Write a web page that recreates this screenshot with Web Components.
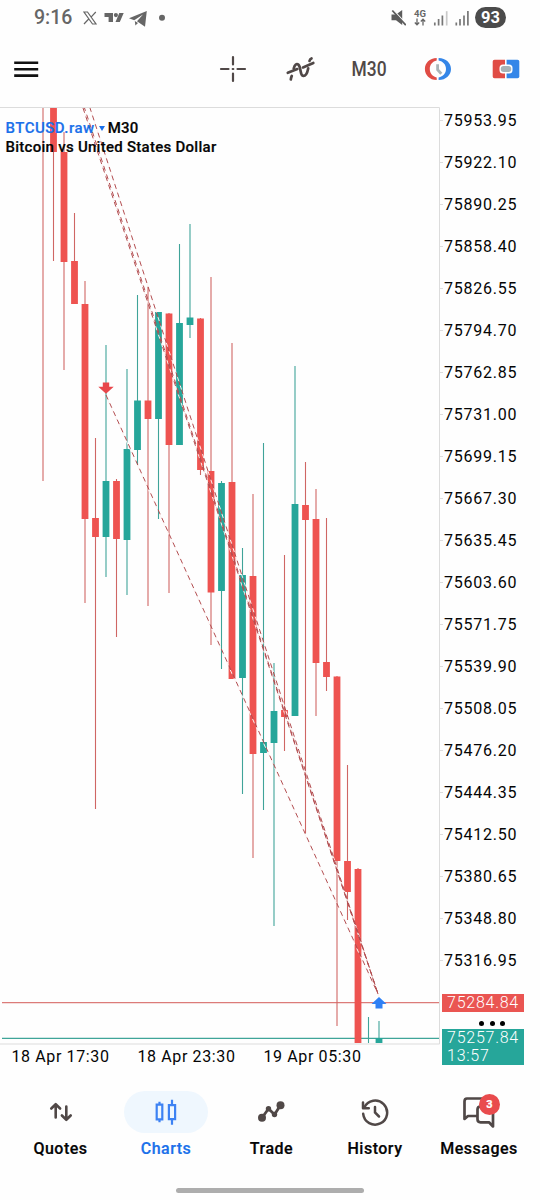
<!DOCTYPE html>
<html lang="en">
<head>
<meta charset="utf-8">
<meta name="viewport" content="width=device-width, initial-scale=1">
<title>BTCUSD.raw M30</title>
<style>
  html, body {
    margin: 0;
    background: #fefefe;
  }

  body {
    width: 540px;
    height: 1200px;
    overflow: hidden;
    font-family: Roboto, "Liberation Sans", sans-serif;
    color: #050505;
  }
</style>
</head>
<body>
<trade-app></trade-app>

<script>
const RED = "#ee5350";
const GREEN = "#26a69a";

const define = (name, html, setup) => {
  const template = document.createElement("template");
  template.innerHTML = html;
  customElements.define(name, class extends HTMLElement {
    constructor() {
      super();
      this.attachShadow({ mode: "open" }).append(template.content.cloneNode(true));
    }

    $(x) { return this.shadowRoot.querySelector(x); }

    connectedCallback() {
      if (setup) setup.call(this);
    }
  });
};

define("status-bar", `
  <style>
  :host {
    display: flex;
    align-items: center;
    height: 34px;
    padding: 1px 34px 0;
    box-sizing: border-box;
    color: #666;
  }

  svg { display: block; }

  .time {
    font-size: 19.5px;
    font-weight: 500;
    width: 49px;
    line-height: 34px;
  }

  .spacer { flex: 1; }

  .net {
    display: flex;
    flex-direction: column;
    align-items: center;
    width: 14px;
    margin: 0 6px 0 7px;
    font-size: 9.5px;
    line-height: 9px;
    font-weight: 700;
  }

  .battery {
    width: 31px;
    height: 21px;
    margin: 0 0 0 6px;
    border-radius: 11px;
    background: #4b4b4b;
    color: #fff;
    font-size: 16.5px;
    font-weight: 700;
    line-height: 22px;
    text-align: center;
  }
  </style>

  <div class="time">9:16</div>
  <svg width="86" height="20" viewBox="83 7.500 86 20" fill="#666">
    <path d="M84 11.500h3.500l8.500 12h-3.500zM95.800 11.500l-5 5.300M84 23.500l5.200-5.500" fill="none" stroke="#666" stroke-width="1.200"/>
    <path d="M104.500 12.500h8.500v9h-4.400v-5h-4.100zM119.300 12.500h4.400l-3.900 9h-4.300z"/>
    <circle cx="115.900" cy="14.600" r="2.100"/>
    <path d="M146.800 10.500l-17.800 7.300 5.200 1.900 8.800-5.700-6 6.800 8 5.500z"/>
    <path d="M134.800 20.500l.6 4.500 2.600-2.600z"/>
    <circle cx="162" cy="17.300" r="3"/>
  </svg>
  <div class="spacer"></div>
  <svg width="17" height="18" viewBox="389 8.500 17 18" fill="#5c5c5c">
    <path d="M391.500 14h4.500l6.200-4.500v15l-6.200-4.800h-4.500z"/>
    <path d="M393.200 9.400l13 14" stroke="#fefefe" stroke-width="1.400"/>
    <path d="M392.300 10l13.500 14.600" stroke="#5c5c5c" stroke-width="1.800"/>
  </svg>
  <div class="net">
    <span>4G</span>
    <svg width="12" height="8" viewBox="0 0 12 8" fill="none" stroke="#666" stroke-width="1.300">
      <path d="M3 .5v6M.8 4.500L3 6.800l2.200-2.300M9 7.500v-6M6.800 3.500L9 1.200l2.200 2.300"/>
    </svg>
  </div>
  <svg width="36" height="16" viewBox="433 9 36 16" fill="none" stroke="#777" stroke-width="1.700">
    <path d="M434.800 24.500v-3M438.600 24.500v-6.500M442.400 24.500v-10"/>
    <path d="M446.700 24.500v-14.300" stroke="#c9c9c9"/>
    <path d="M456.300 24.500v-3M460 24.500v-6.500M464 24.500v-10M467.900 24.500v-14.500"/>
  </svg>
  <div class="battery">93</div>
`);

define("tool-bar", `
  <style>
  :host {
    display: flex;
    align-items: center;
    height: 73px;
    padding: 0 20px 4px 13px;
    box-sizing: border-box;
  }

  svg {
    display: block;
    flex: none;
  }

  .tools {
    display: grid;
    grid-template-columns: repeat(5, 68.300px);
    justify-items: center;
    align-items: center;
    margin-left: auto;
    margin-right: -20px;
  }

  .frame {
    color: #504847;
    font-size: 20px;
    font-weight: 500;
    line-height: 26px;
    transform: scaleX(.87);
  }
  </style>

  <svg width="26" height="18" viewBox="0 0 26 18" stroke="#111" stroke-width="2.600">
    <path d="M1.200 2.800h24M1.200 9.200h24M1.200 15.600h24"/>
  </svg>
  <div class="tools">
    <svg width="28" height="28" viewBox="0 0 28 28" stroke="#504847" stroke-width="2.200" stroke-linecap="round">
      <path d="M14 2v7.500M14 18.500V26M2 14h7.500M18.500 14H26M13.700 14h.6"/>
    </svg>
    <svg width="30" height="28" viewBox="0 0 30 28" fill="none" stroke="#504847" stroke-width="2.700" stroke-linecap="round">
      <path d="M4.800 24.500c.2-1.400.5-2.500 1-3.600M7.700 13.500c1-4 3-5.500 4.800-3.700 2.700 2.600 1.300 10.700 4.800 11.100 3 .2 4-3 4.900-7.500M23.500 6c.3-1.300 1-2.200 2-2.600"/>
      <path d="M1.800 17.800l9.500-3.700M17 12.400l10.300-4.400"/>
    </svg>
    <div class="frame">M30</div>
    <svg width="28" height="24" viewBox="0 0 28 24">
      <path d="M12.700 1C5.500 1 .9 6 .9 12s4.600 11 11.800 11v-2.600C8.500 19.500 5.800 16.300 5.800 12s2.700-7.500 6.900-8.400z" fill="#e04c45"/>
      <path d="M14.600 1C22 1 27 6 27 12s-5 11-12.400 11v-2.600c4.500-.9 7.400-4.100 7.400-8.400s-2.900-7.500-7.400-8.400z" fill="#3486e8"/>
      <path d="M13.600 7.200v5.600l3.700 4" fill="none" stroke="#a9b5b8" stroke-width="2.800"/>
    </svg>
    <svg width="28" height="20" viewBox="0 0 28 20">
      <path d="M2.500 .8H13v18.400H2.500Q.7 19.200.7 17.500V2.500Q.7.800 2.500.8z" fill="#e04c45"/>
      <path d="M14.600 .8h10.900q1.800 0 1.800 1.700v15q0 1.700-1.800 1.700H14.600z" fill="#3486e8"/>
      <rect x="7.500" y="5.500" width="13" height="9" rx="3.500" fill="#fff"/>
      <rect x="8.700" y="6.900" width="10.600" height="6.200" rx="3" fill="#a8b3b7"/>
    </svg>
  </div>
`);

// Each candle: [high, low, open/close top, open/close bottom, rising]
const candles = [
  [108, 481, 0, 0, 0],
  [108, 261, 108, 152, 0],
  [132, 370, 152, 262, 0],
  [213, 304, 261, 304, 0],
  [281, 603, 304, 519, 0],
  [438, 809, 518, 537, 0],
  [345, 577, 481, 537, 1],
  [479, 637, 481, 539, 0],
  [369, 595, 449, 540, 1],
  [295, 465, 400.5, 450, 1],
  [287, 606, 400.5, 419, 0],
  [312, 519, 312, 419, 1],
  [313, 593, 313.500, 445, 0],
  [244, 445, 323, 445, 1],
  [224, 338, 317.500, 325, 1],
  [318, 475, 318.500, 470, 0],
  [277, 645, 471, 592.500, 0],
  [481, 669, 483, 591, 1],
  [343, 679, 482, 679, 0],
  [548, 794, 575, 678, 1],
  [494, 858, 576, 754, 0],
  [443, 810, 742, 753, 1],
  [663, 926, 711, 743, 1],
  [555, 751, 710, 717, 0],
  [366, 716, 504, 716, 1],
  [462, 833, 505, 520, 0],
  [489, 716, 519, 663, 0],
  [518, 691, 662, 677, 0],
  [676, 1026, 676.500, 861, 0],
  [765, 920, 861, 892, 0],
  [868, 1043, 869, 1043, 0],
  [1017, 1043, 0, 0, 1],
  [1021, 1043, 1038, 1043, 1],
];

define("candle-plot", `
  <style>
  :host {
    display: block;
    position: relative;
    width: 440px;
    height: 938px;
  }

  svg { display: block; }

  .title {
    position: absolute;
    left: 5.500px;
    top: 12px;
    font-size: 15px;
    line-height: 18.500px;
    font-weight: 500;
    letter-spacing: .270px;
    white-space: nowrap;
    color: #050505;
    -webkit-text-stroke: .2px;
  }

  .symbol {
    display: flex;
    align-items: center;
  }

  .symbol b {
    font-weight: 500;
    letter-spacing: .480px;
    color: #1a70ea;
  }

  .symbol i {
    border: 3px solid transparent;
    border-top: 5px solid #1a70ea;
    border-bottom: 0;
    margin: 0 3px 0 4px;
  }
  </style>

  <svg width="440" height="938" viewBox="0 107 440 938">
    <path d="M0 107.500H439.500V1044H0" fill="none" stroke="#dcdcdc"/>
    <path d="M2 1002.700h437" stroke="#dc7b79" stroke-width="1.200"/>
    <path d="M2 1038.300h437" stroke="#3fa599" stroke-width="1.200"/>
    <g id="candles"></g>
    <g id="trades" fill="none" stroke-dasharray="5 4">
      <path d="M106 395L378 994"/>
      <path d="M83 108L378 994"/>
      <path d="M84.500 108L378 994" stroke-dashoffset="2"/>
      <path d="M90 108L378 994" stroke-dashoffset="1"/>
    </g>
    <path d="M102.800 382.500h6.400v4.300h4.500l-7.700 6.900-7.700-6.900h4.500z" fill="#e8474b"/>
    <path d="M375.500 1008.500v-4.500h-4l7.500-7 7.500 7h-4v4.500z" fill="#2f80f5"/>
  </svg>
  <div class="title">
    <div class="symbol"><b>BTCUSD.raw</b><i></i><span>M30</span></div>
    <div class="name">Bitcoin vs United States Dollar</div>
  </div>
`, function () {
  this.$("#candles").innerHTML = candles.map(([high, low, top, bottom, up], i) => {
    const x = 43 + i * 10.500;
    const body = bottom
      ? `<rect x="${x - 3.400}" y="${top}" width="6.800" height="${bottom - top}" fill="${up ? GREEN : RED}"/>`
      : "";
    return `<path d="M${x} ${high}V${low}" stroke="${up ? "#3fa399" : "#cf6664"}" stroke-width="1.100"/>${body}`;
  }).join("");

  // light dashes fill the gaps, so the trade lines show over candle bodies
  const trades = this.$("#trades");
  const over = trades.cloneNode(true);
  trades.setAttribute("stroke", "#fdf3f2");
  trades.setAttribute("transform", "translate(1.400 4.300)");
  trades.lastElementChild.previousElementSibling.remove();
  over.removeAttribute("id");
  over.setAttribute("stroke", "#b34d50");
  trades.after(over);
});

define("price-axis", `
  <style>
  :host {
    display: block;
    position: relative;
    width: 100px;
    height: 938px;
    font-size: 16px;
    letter-spacing: .75px;
  }

  .labels {
    margin-top: -7.500px;
  }

  .labels div {
    height: 42px;
    line-height: 42px;
    padding-left: 4px;
    background: linear-gradient(#ddd, #ddd) 0 50% / 3px 1px no-repeat;
  }

  .tag {
    position: absolute;
    left: 2px;
    width: 82px;
    padding-left: 5px;
    box-sizing: border-box;
    line-height: 18px;
    color: #fff;
    font-weight: 300;
  }

  .ask {
    top: 887px;
    background: #ea5552;
  }

  .bid {
    top: 922px;
    background: #26a69a;
  }

  .more {
    position: absolute;
    left: 39px;
    top: 913.500px;
    display: flex;
    gap: 5.500px;
  }

  .more i {
    width: 5px;
    height: 5px;
    border-radius: 50%;
    background: #000;
  }
  </style>

  <div class="labels"></div>
  <div class="tag ask">75284.84</div>
  <div class="more"><i></i><i></i><i></i></div>
  <div class="tag bid">75257.84<br>13:57</div>
`, function () {
  const rows = [];
  for (let i = 0; i < 21; i++)
    rows.push(`<div>${(75953.95 - i * 31.85).toFixed(2)}</div>`);
  this.$(".labels").innerHTML = rows.join("");
});

define("time-axis", `
  <style>
  :host {
    display: grid;
    grid-template-columns: repeat(3, 126px);
    height: 23px;
    padding-left: 11.500px;
    font-size: 16px;
    line-height: 23px;
    letter-spacing: .620px;
    white-space: nowrap;
  }
  </style>
  <span>18 Apr 17:30</span>
  <span>18 Apr 23:30</span>
  <span>19 Apr 05:30</span>
`);

define("nav-item", `
  <style>
  :host {
    display: flex;
    flex-direction: column;
    align-items: center;
    font-size: 16px;
    font-weight: 500;
    letter-spacing: .5px;
    color: #050505;
    -webkit-text-stroke: .2px;
  }

  :host([active]) { color: #1a70ea; }

  .icon {
    display: flex;
    align-items: center;
    justify-content: center;
    position: relative;
    width: 84px;
    height: 42px;
    border-radius: 21px;
  }

  :host([active]) .icon { background: #eff7fe; }

  .label {
    margin-top: 6px;
    line-height: 20px;
  }

  .badge {
    position: absolute;
    left: 42px;
    top: 2.500px;
    width: 21px;
    height: 21px;
    border-radius: 50%;
    background: #e94b4d;
    color: #fff;
    font-size: 11px;
    font-weight: 700;
    line-height: 21.500px;
    letter-spacing: 0;
    text-align: center;
  }

  .badge[hidden] { display: none; }
  </style>

  <div class="icon"><slot></slot><span class="badge" hidden></span></div>
  <div class="label"></div>
`, function () {
  this.$(".label").textContent = this.getAttribute("label");
  const count = this.getAttribute("count");
  if (count) {
    this.$(".badge").hidden = false;
    this.$(".badge").textContent = count;
  }
});

define("nav-bar", `
  <style>
  :host {
    display: grid;
    grid-template-columns: 121px 90px 121px 86px 122px;
    height: 120px;
    padding-top: 23px;
    box-sizing: border-box;
    justify-items: center;
  }

  svg { display: block; }
  </style>

  <nav-item label="Quotes">
    <svg width="24" height="22" viewBox=".7 0 24 22" fill="none" stroke="#504847" stroke-width="2.600" stroke-linecap="round" stroke-linejoin="round">
      <path d="M7.400 16.500V3.500M3 7.500l4.400-4.300 4.400 4.300M18 5.500v13M13.600 14.500l4.400 4.300 4.400-4.300"/>
    </svg>
  </nav-item>
  <nav-item label="Charts" active>
    <svg width="24" height="28" viewBox=".5 0 24 28" fill="none" stroke="#3d82f3" stroke-width="2.200">
      <path d="M3.200 6.700h5.600v14.600H3.200zM6 3.700v3M6 21.300v3M15.400 7.200h6.200v14H15.400zM18.500 1.700v5.500M18.500 21.200v5.500"/>
    </svg>
  </nav-item>
  <nav-item label="Trade">
    <svg width="28" height="24" viewBox=".5 0 28 24" fill="none" stroke="#504847" stroke-width="2.800" stroke-linejoin="round">
      <path d="M4.500 17.800L11 8.700l6 5.800L23 5.200"/>
      <g fill="#504847" stroke="none">
        <circle cx="4.500" cy="17.800" r="4"/>
        <circle cx="11" cy="8.700" r="2.700"/>
        <circle cx="17" cy="14.500" r="2.700"/>
        <circle cx="23" cy="5.200" r="4"/>
      </g>
    </svg>
  </nav-item>
  <nav-item label="History">
    <svg width="30" height="28" viewBox="0 0 30 28" fill="none" stroke="#504847" stroke-width="2.500" stroke-linecap="round">
      <path d="M4.300 9.500A12 12 0 1 1 3.200 15.800"/>
      <path d="M3 4.500v5.700h5.800" stroke-linejoin="round"/>
      <path d="M15 9v5.500l4 4"/>
    </svg>
  </nav-item>
  <nav-item label="Messages" count="3">
    <svg width="32" height="32" viewBox="0 0 32 32" fill="none" stroke="#504847" stroke-width="2.700" stroke-linejoin="round">
      <path d="M26 10V5.500Q26 2.500 23 2.500H4Q1.500 2.500 1.500 5.500V23l3.500-3h9"/>
      <path d="M17.500 10.500h9.500q3 0 3 3v17l-4-4.200h-8.500q-3 0-3-3v-9.800q0-3 3-3z"/>
    </svg>
  </nav-item>
`);

define("trade-app", `
  <style>
  :host {
    display: flex;
    flex-direction: column;
    width: 540px;
    height: 1200px;
  }

  .chart { display: flex; }

  .home {
    width: 188px;
    height: 5px;
    margin: 0 auto 0 176px;
    border-radius: 3px;
    background: #adadad;
  }
  </style>

  <status-bar></status-bar>
  <tool-bar></tool-bar>
  <div class="chart">
    <candle-plot></candle-plot>
    <price-axis></price-axis>
  </div>
  <time-axis></time-axis>
  <nav-bar></nav-bar>
  <div class="home"></div>
`);
</script>
</body>
</html>
